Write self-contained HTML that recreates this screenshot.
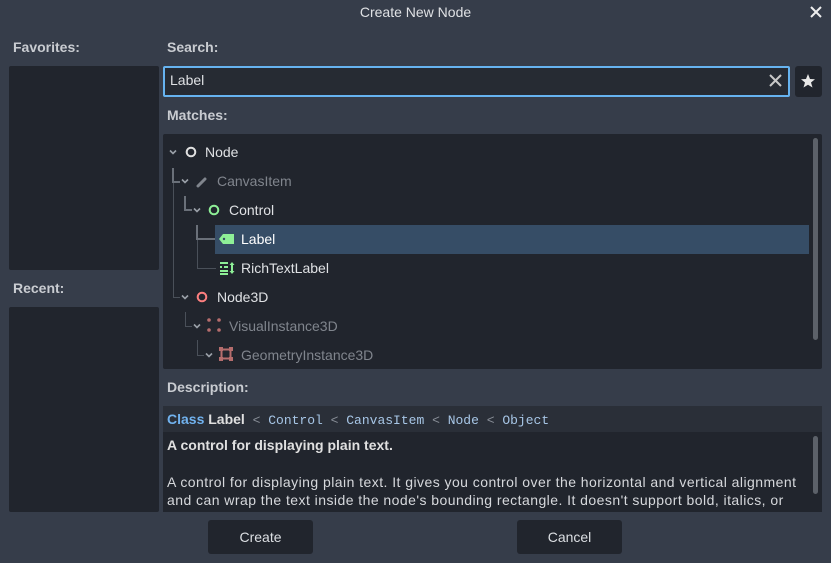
<!DOCTYPE html><html><head><style>
body{margin:0;width:831px;height:563px;background:#363d4a;font-family:"Liberation Sans",sans-serif;position:relative;overflow:hidden;color:#dfe1e4}
.a{position:absolute}
.lbl{font-weight:bold;font-size:14px;color:#c9ccd1}
.pn{background:#21252d;border-radius:2px}
.t{font-size:14px;white-space:nowrap}
.g{color:#80858d}
.ln{border-left:2px solid #6a7079;border-bottom:2px solid #6a7079}
.ln2{border-left:1px solid #4a5059;border-bottom:1px solid #4a5059}
.btn{background:#21252d;border-radius:3px;font-size:14px;text-align:center;line-height:34px;color:#dcdfe3}
mono{font-family:"Liberation Mono",monospace;font-size:13px;color:#a7c6e6}
</style></head><body>
<svg width="0" height="0" style="position:absolute"><defs><symbol id="cv" viewBox="0 0 10 10"><path d="M2 3.5L5 6.5L8 3.5" fill="none" stroke="#9aa0a8" stroke-width="1.6"/></symbol></defs></svg>
<div class="a" style="left:0;width:831px;top:4px;text-align:center;font-size:14px;color:#dfe1e4">Create New Node</div>
<svg class="a" style="left:809px;top:5px" width="14" height="14"><path d="M2 2L12 12M12 2L2 12" stroke="#eee" stroke-width="2"/></svg>
<div class="a lbl" style="left:13px;top:39px">Favorites:</div>
<div class="a pn" style="left:9px;top:66px;width:150px;height:204px"></div>
<div class="a lbl" style="left:13px;top:280px">Recent:</div>
<div class="a pn" style="left:9px;top:307px;width:150px;height:205px"></div>
<div class="a lbl" style="left:167px;top:39px">Search:</div>
<div class="a" style="left:163px;top:66px;width:623px;height:27px;background:#262b33;border:2px solid #66b3f0;border-radius:2px"></div>
<div class="a t" style="left:170px;top:72px">Label</div>
<svg class="a" style="left:769px;top:74px" width="13" height="13"><path d="M1 1L12 12M12 1L1 12" stroke="#c8c8c8" stroke-width="2"/></svg>
<div class="a pn" style="left:795px;top:66px;width:27px;height:31px;border-radius:3px"></div>
<svg class="a" style="left:800px;top:73px" width="16" height="16" viewBox="0 0 16 16"><path d="M8 1L10 6L15 6.3L11 9.5L12.5 14.5L8 11.7L3.5 14.5L5 9.5L1 6.3L6 6Z" fill="#e8e8e8"/></svg>
<div class="a lbl" style="left:167px;top:107px">Matches:</div>
<div class="a pn" style="left:163px;top:134px;width:659px;height:235px"></div>
<div class="a" style="left:813px;top:138px;width:5px;height:202px;background:#5c6169;border-radius:3px"></div>
<div class="a ln" style="left:172px;top:168px;width:6px;height:13px"></div>
<div class="a ln2" style="left:173px;top:183px;width:6px;height:114px"></div>
<div class="a ln" style="left:184px;top:196px;width:6px;height:13px"></div>
<div class="a ln" style="left:196px;top:225px;width:17px;height:13px"></div>
<div class="a ln2" style="left:197px;top:240px;width:18px;height:28px"></div>
<div class="a ln2" style="left:185px;top:312px;width:6px;height:14px"></div>
<div class="a ln2" style="left:197px;top:340px;width:6px;height:15px"></div>
<div class="a" style="left:215px;top:225px;width:594px;height:29px;background:#364d66"></div>
<svg class="a" style="left:168px;top:147px" width="10" height="10"><use href="#cv"/></svg>
<svg class="a" style="left:185px;top:146px" width="12" height="12"><circle cx="6" cy="6" r="4.3" fill="none" stroke="#e0e0e0" stroke-width="2"/></svg>
<div class="a t" style="left:205px;top:144px">Node</div>
<svg class="a" style="left:180px;top:176px" width="10" height="10"><use href="#cv"/></svg>
<svg class="a" style="left:196px;top:174px" width="14" height="14"><path d="M2 12L9 5" stroke="#80858d" stroke-width="3" stroke-linecap="round"/></svg>
<div class="a t g" style="left:217px;top:173px">CanvasItem</div>
<svg class="a" style="left:192px;top:205px" width="10" height="10"><use href="#cv"/></svg>
<svg class="a" style="left:208px;top:204px" width="12" height="12"><circle cx="6" cy="6" r="4.3" fill="none" stroke="#8eef97" stroke-width="2"/></svg>
<div class="a t" style="left:229px;top:202px">Control</div>
<svg class="a" style="left:219px;top:233px" width="16" height="12"><path d="M4 1H15V11H4L0 6Z" fill="#8eef97"/><circle cx="5" cy="6" r="1.2" fill="#364d66"/></svg>
<div class="a t" style="left:241px;top:231px;color:#fff">Label</div>
<svg class="a" style="left:219px;top:261px" width="16" height="14"><g stroke="#8eef97" stroke-width="2"><path d="M1 2H9M1 6H3M5 6H9M1 10H9M1 13H9M13 3V11"/></g><path d="M10.5 4L13 1L15.5 4ZM10.5 10L13 13L15.5 10Z" fill="#8eef97"/></svg>
<div class="a t" style="left:241px;top:260px">RichTextLabel</div>
<svg class="a" style="left:180px;top:292px" width="10" height="10"><use href="#cv"/></svg>
<svg class="a" style="left:196px;top:291px" width="12" height="12"><circle cx="6" cy="6" r="4.3" fill="none" stroke="#fc7f7f" stroke-width="2"/></svg>
<div class="a t" style="left:217px;top:289px">Node3D</div>
<svg class="a" style="left:192px;top:321px" width="10" height="10"><use href="#cv"/></svg>
<svg class="a" style="left:207px;top:318px" width="14" height="14"><g fill="#b56d6d"><circle cx="2" cy="2" r="1.8"/><circle cx="12" cy="2" r="1.8"/><circle cx="2" cy="12" r="1.8"/><circle cx="12" cy="12" r="1.8"/></g></svg>
<div class="a t g" style="left:229px;top:318px">VisualInstance3D</div>
<svg class="a" style="left:204px;top:350px" width="10" height="10"><use href="#cv"/></svg>
<svg class="a" style="left:219px;top:347px" width="14" height="14"><rect x="2.5" y="2.5" width="9" height="9" fill="none" stroke="#b56d6d" stroke-width="2"/><g fill="#b56d6d"><rect x="0" y="0" width="4" height="4"/><rect x="10" y="0" width="4" height="4"/><rect x="0" y="10" width="4" height="4"/><rect x="10" y="10" width="4" height="4"/></g></svg>
<div class="a t g" style="left:241px;top:347px">GeometryInstance3D</div>
<div class="a lbl" style="left:167px;top:379px">Description:</div>
<div class="a" style="left:163px;top:406px;width:659px;height:26px;background:#2a2f38"></div>
<div class="a pn" style="left:163px;top:432px;width:659px;height:80px;border-radius:0"></div>
<div class="a" style="left:813px;top:436px;width:5px;height:58px;background:#5c6169;border-radius:3px"></div>
<div class="a t" style="left:167px;top:411px"><b style="color:#71b2ee">Class</b> <b style="color:#e0e0e0">Label</b>&nbsp; <mono><span style="color:#8a9099">&lt;</span> Control <span style="color:#8a9099">&lt;</span> CanvasItem <span style="color:#8a9099">&lt;</span> Node <span style="color:#8a9099">&lt;</span> Object</mono></div>
<div class="a t" style="left:167px;top:437px;font-weight:bold;color:#e0e0e0">A control for displaying plain text.</div>
<div class="a t" style="left:167px;top:473px;line-height:18px;color:#d6d8dc;letter-spacing:0.45px">A control for displaying plain text. It gives you control over the horizontal and vertical alignment<br>and can wrap the text inside the node's bounding rectangle. It doesn't support bold, italics, or</div>
<div class="a btn" style="left:208px;top:520px;width:105px;height:34px">Create</div>
<div class="a btn" style="left:517px;top:520px;width:105px;height:34px">Cancel</div>
</body></html>
